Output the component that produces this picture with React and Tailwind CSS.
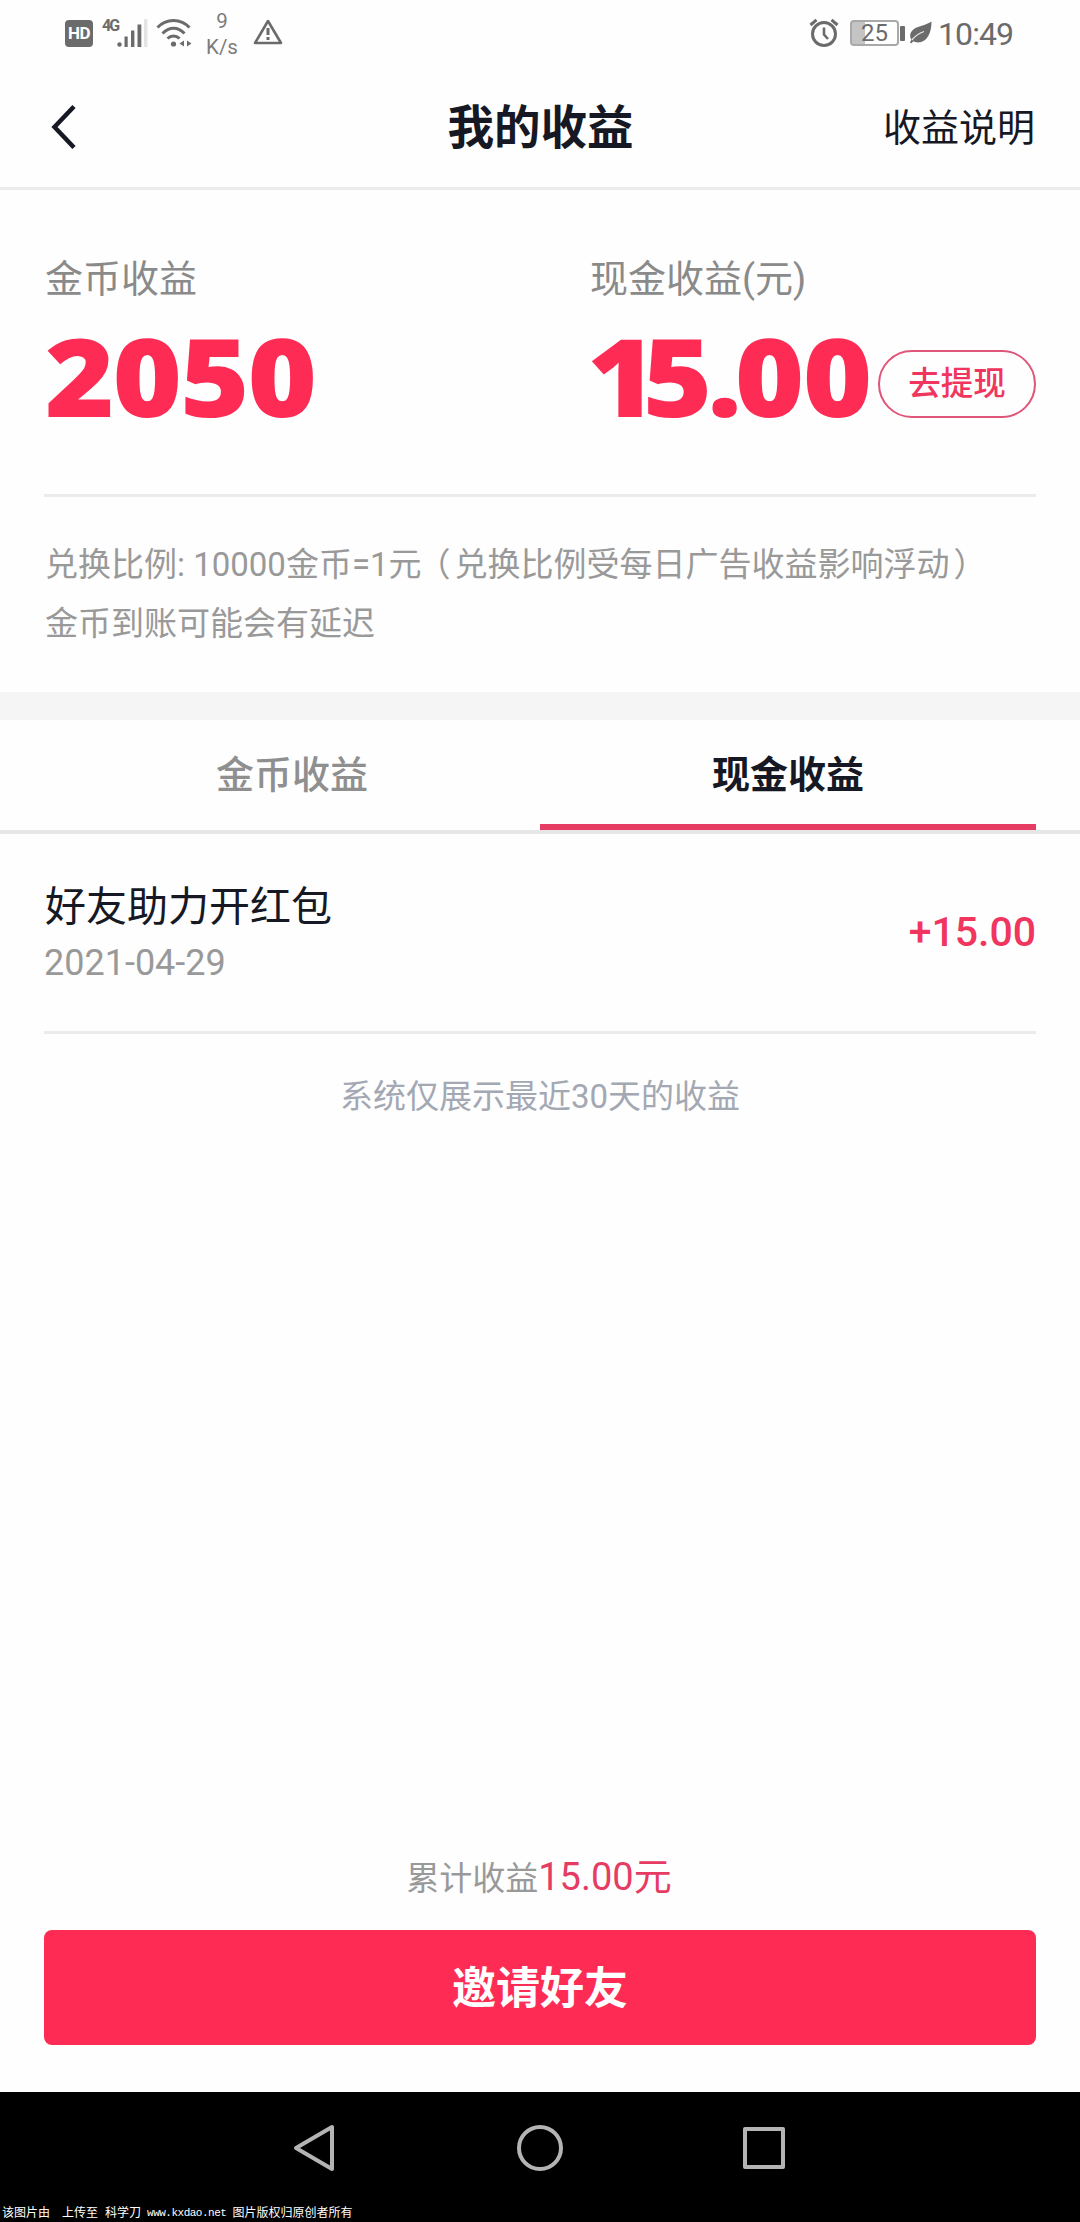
import React, { useState } from 'react';

const records = [{ id: 1, title: '好友助力开红包', date: '2021-04-29', amount: '+15.00' }];

function StatusBar() {
  return (
    <div className="h-[68px] shrink-0 flex items-start justify-between pl-[65px] pr-[66px] text-[#6b6b6b]">
      <div className="flex items-start">
        <div className="mt-[20px] w-[28px] h-[27px] rounded-[4px] bg-[#6b6b6b] text-white text-[17px] leading-[27px] font-bold text-center tracking-[-0.5px]">HD</div>
        <div className="mt-[17px] ml-[9px] w-[17px] text-[16px] leading-[18px] font-bold tracking-[-2px]">4G</div>
        <svg className="mt-[18px] ml-[-2px]" width="31" height="30" viewBox="0 0 31 30">
          <circle cx="2.5" cy="26.5" r="2.2" fill="#6b6b6b" />
          <rect x="7.5" y="18.5" width="3.2" height="10.5" fill="#6b6b6b" />
          <rect x="14" y="12.5" width="3.4" height="16.5" fill="#6b6b6b" />
          <rect x="20.5" y="6.5" width="3.8" height="22.5" fill="#6b6b6b" />
          <rect x="27" y="1" width="3.4" height="28" fill="#e4e4e4" />
        </svg>
        {/* wifi */}
        <svg className="mt-[18px] ml-[8px]" width="36" height="30" viewBox="0 0 36 30" fill="none" stroke="#6b6b6b" strokeWidth="3">
          <path d="M1.5 9.5C10 0 25 0 33.5 9.5" />
          <path d="M6.5 15.5C13 8.5 22 8.5 28.5 15.5" />
          <path d="M11.5 20.5C15 17 20 17 23.5 20.5" />
          <circle cx="17.5" cy="26" r="2.6" fill="#6b6b6b" stroke="none" />
          <path d="M28 22.5v6l-4.5-3zM31 22.5v6l4.5-3z" fill="#6b6b6b" stroke="none" />
        </svg>
        <div className="mt-[8px] ml-[12px] w-[36px] flex flex-col items-center text-[20.5px] leading-[26px] text-[#7c7c7c]">
          <span>9</span>
          <span>K/s</span>
        </div>
        <svg className="mt-[17px] ml-[12px]" width="32" height="28" viewBox="0 0 32 28" fill="none" stroke="#6b6b6b" strokeWidth="2.6">
          <path d="M16 4L29 26H3z" strokeLinejoin="round" />
          <path d="M16 11v7M16 20v3" strokeWidth="3" />
        </svg>
      </div>
      <div className="flex items-start">
        <svg className="mt-[18px] ml-[-2px]" width="32" height="30" viewBox="0 0 32 30" fill="none" stroke="#6b6b6b" strokeWidth="3">
          <circle cx="16" cy="16" r="11.5" />
          <path d="M16 9.5v7l4 4.5" strokeWidth="2.6" />
          <path d="M2.5 7L8.5 1.8M29.5 7L23.5 1.8" />
        </svg>
        <div className="mt-[20px] ml-[10px] w-[49px] h-[26px] rounded-[4px] border-2 border-[#a9a9a9] bg-linear-to-r from-[#c4c4c4] from-28% to-white to-28% text-[24px] leading-[23px] text-center">25</div>
        <div className="mt-[26px] ml-[1px] w-[5px] h-[15px] rounded-[1px] bg-[#6b6b6b]" />
        <svg className="mt-[21px] ml-[4px]" width="23" height="23" viewBox="0 0 23 23">
          <path d="M22.5 0.5C22.5 12 18 21.5 9 21.5C7 21.5 5.5 21 4.5 20.3L2 22.5L1 21.5L2.5 18.5C0 15 1 11 5 8C10 4.5 17 4.5 22.5 0.5z" fill="#6b6b6b" />
          <path d="M3 19C6.5 14.5 10.5 12 15 10.5" stroke="#e8e8e8" strokeWidth="1.3" fill="none" />
        </svg>
        <div className="mt-[16px] ml-[6px] w-[76px] text-[32px] leading-[36px] tracking-[-0.9px] whitespace-nowrap">10:49</div>
      </div>
    </div>
  );
}

function Header() {
  return (
    <header className="h-[122px] shrink-0 flex items-center justify-between pl-[44px] pr-[45px] border-b-3 border-[#ebebeb] text-[#161823]">
      <div className="w-[152px]">
        <svg className="ml-[4px] mb-[2px]" width="32" height="48" viewBox="0 0 32 48" fill="none" stroke="#161823" strokeWidth="4.5">
          <path d="M26 3.5L6.5 24L26 44.5" />
        </svg>
      </div>
      <h1 className="pl-[2px] text-[46.5px] leading-[60px] font-bold">我的收益</h1>
      <span className="w-[152px] pt-[1px] text-[38px] leading-[50px] whitespace-nowrap">收益说明</span>
    </header>
  );
}

function Amount({ children }) {
  return (
    <div className='origin-left scale-x-[1.1] font-["Open_Sans"] font-extrabold text-[108px] leading-[100px] tracking-[-1.9px] text-[#fe2c55]'>
      {children}
    </div>
  );
}

function Summary() {
  return (
    <section className="h-[502px] shrink-0 px-[44px] text-[#8a8a8a]">
      <div className="h-[307px] pt-[64px] flex border-b-3 border-[#ebebeb]">
        <div className="w-[546px]">
          <div className="pl-[1px] text-[38px] leading-[50px]">金币收益</div>
          <div className="mt-[22px] pl-[1px]">
            <Amount>2050</Amount>
          </div>
        </div>
        <div>
          <div className="text-[38px] leading-[50px]">现金收益(元)</div>
          <div className="mt-[22px] flex items-center">
            <div className="w-[288px]">
              <div className="ml-[-3px]">
                <Amount>
                  <span className="tracking-[-12.5px]">1</span>
                  <span className="tracking-[-4.5px]">5</span>
                  <span className="tracking-[-6.5px]">.</span>
                  <span className="tracking-[-1.5px]">00</span>
                </Amount>
              </div>
            </div>
            <button className="mt-[16px] w-[158px] h-[68px] rounded-full border-2 border-[#e0557a] text-[32.5px] leading-[40px] font-medium text-[#f0355f]">去提现</button>
          </div>
        </div>
      </div>
      <div className="pt-[38px] pl-[1px] text-[33px] leading-[59px] text-[#999]">
        <p className="whitespace-nowrap">
          兑换比例: 10000金币=1元<span className="ml-[-4px] mr-[4px]">（</span>兑换比例受每日广告收益影响浮动<span className="ml-[4px]">）</span>
        </p>
        <p>金币到账可能会有延迟</p>
      </div>
    </section>
  );
}

function Tabs({ active, onChange }) {
  return (
    <div className="h-[114px] shrink-0 px-[44px] flex border-b-4 border-[#e6e6e6]">
      {['金币收益', '现金收益'].map((t, i) => (
        <button
          key={t}
          onClick={() => onChange(i)}
          className={`flex-1 h-[110px] pt-[5px] border-b-6 text-[38px] leading-[50px] ${active === i ? 'border-[#e63c64] text-[#161823] font-bold' : 'border-transparent text-[#8f8f8f] font-medium'}`}
        >
          {t}
        </button>
      ))}
    </div>
  );
}

function NavBar() {
  return (
    <footer className="h-[130px] shrink-0 bg-black flex flex-col text-white">
      <div className="h-[112px] flex items-center justify-center gap-[172px]">
        <svg width="52" height="52" viewBox="0 0 52 52" fill="none" stroke="#b4b4b4" strokeWidth="4" strokeLinejoin="round">
          <path d="M42 5v42L6 26z" />
        </svg>
        <svg width="52" height="52" viewBox="0 0 52 52" fill="none" stroke="#b4b4b4" strokeWidth="4">
          <circle cx="26" cy="26" r="21" />
        </svg>
        <svg width="52" height="52" viewBox="0 0 52 52" fill="none" stroke="#b4b4b4" strokeWidth="4" strokeLinejoin="round">
          <rect x="7" y="7" width="38" height="38" />
        </svg>
      </div>
      <div className="pl-[2px] flex items-center text-[12px] leading-[18px] whitespace-nowrap">
        <span>该图片由</span>
        <span className="ml-[12px]">上传至</span>
        <span className="ml-[7px]">科学刀</span>
        <span className='ml-[6px] font-["Liberation_Mono"] text-[11px] tracking-[-0.5px]'>www.kxdao.net</span>
        <span className="ml-[6px]">图片版权归原创者所有</span>
      </div>
    </footer>
  );
}

export default function App() {
  const [tab, setTab] = useState(1);

  return (
    <div className='w-[1080px] h-[2222px] flex flex-col bg-[#fefefe] overflow-hidden font-["Roboto","Noto_Sans_CJK_SC",sans-serif]'>
      <StatusBar />
      <Header />
      <Summary />
      <div className="h-[28px] shrink-0 bg-[#f5f5f5]" />
      <Tabs active={tab} onChange={setTab} />

      <main className="flex-1 px-[44px]">
        {records.map((r) => (
          <div key={r.id} className="h-[200px] pt-[45px] flex justify-between border-b-3 border-[#ebebeb]">
            <div>
              <div className="pl-[1px] text-[41px] leading-[56px] text-[#161823]">{r.title}</div>
              <div className="text-[36px] leading-[56px] text-[#999]">{r.date}</div>
            </div>
            <div className="mt-[25px] text-[41px] leading-[56px] font-medium text-[#f0355f]">{r.amount}</div>
          </div>
        ))}
        <p className="mt-[38px] text-center text-[33px] leading-[50px] text-[#a3a8b3]">系统仅展示最近30天的收益</p>
      </main>

      <div className="px-[44px] pb-[47px]">
        <div className="mb-[26px] pr-[2px] flex items-baseline justify-center leading-[50px]">
          <span className="text-[33px] text-[#999]">累计收益</span>
          <span className="text-[38px] text-[#e63c64]">15.00元</span>
        </div>
        <button className="w-full h-[115px] pt-[3px] rounded-[8px] bg-[#fe2c55] text-white text-[44px] font-bold">邀请好友</button>
      </div>
      <NavBar />
    </div>
  );
}
